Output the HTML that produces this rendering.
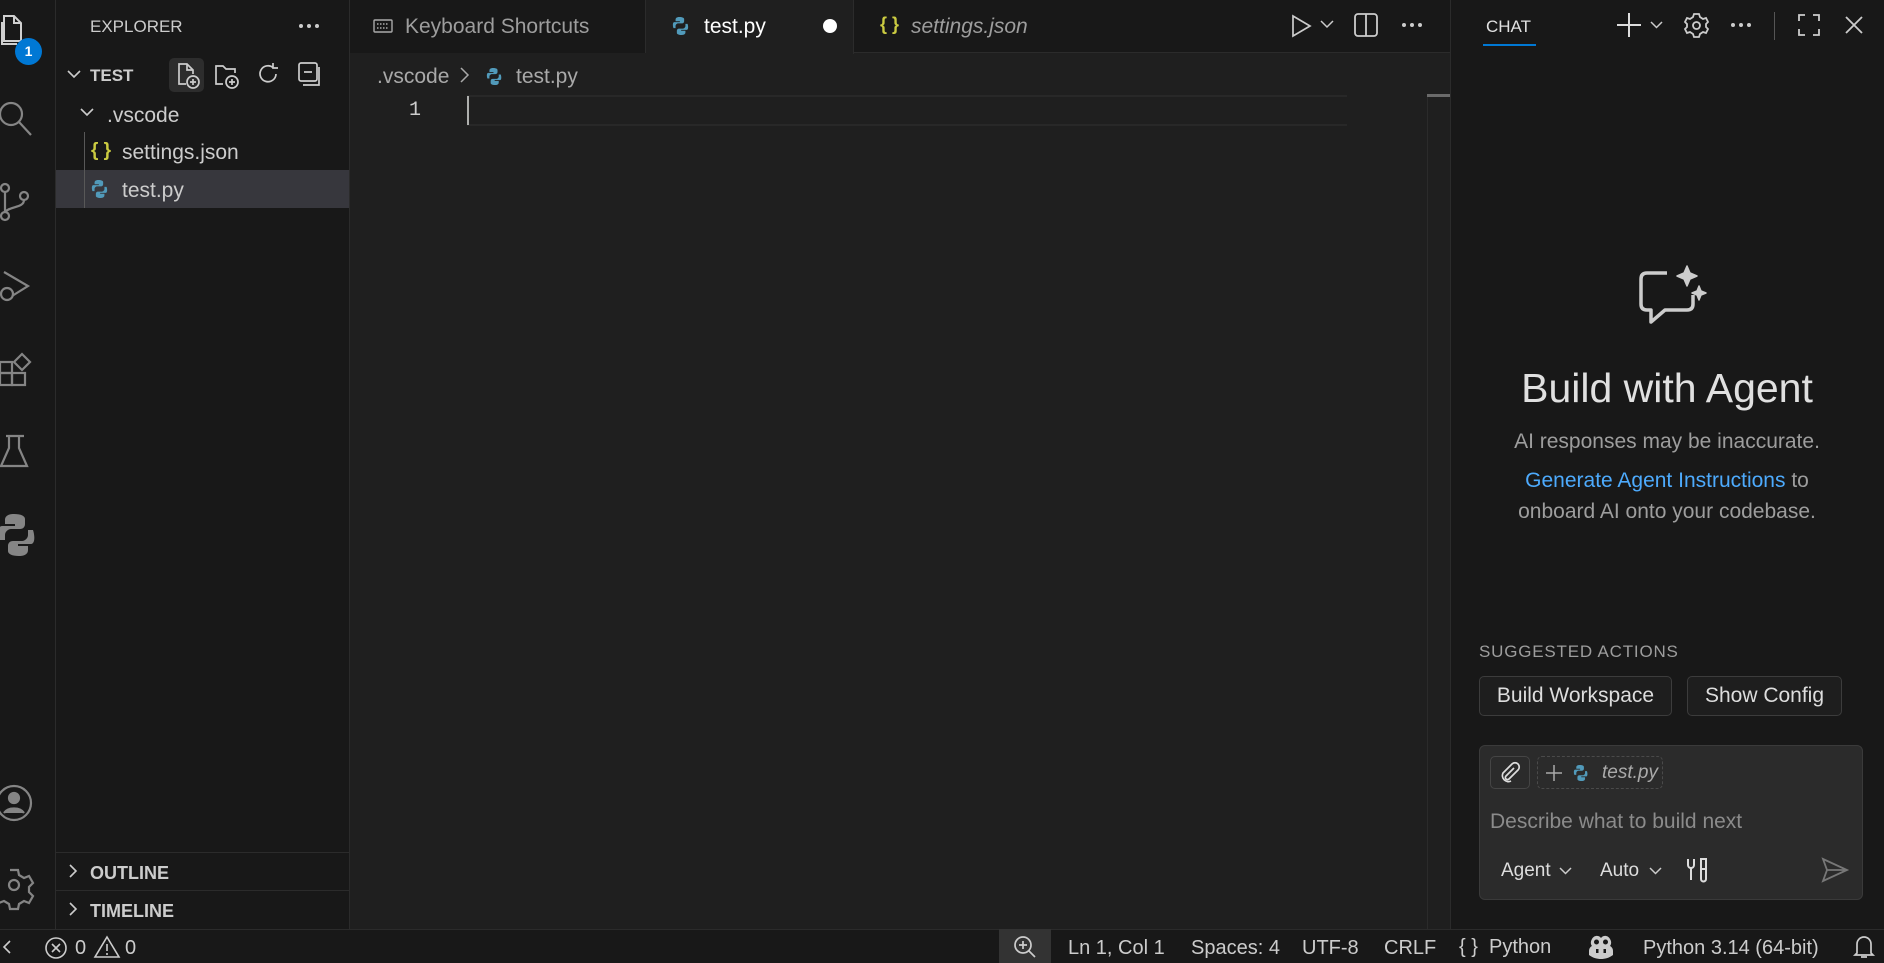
<!DOCTYPE html>
<html><head><meta charset="utf-8">
<style>
*{box-sizing:border-box;margin:0;padding:0}
body{width:1884px;height:963px;overflow:hidden;background:#181818;font-family:"Liberation Sans",sans-serif;color:#cccccc;position:relative}
.abs{position:absolute}
svg{position:absolute;overflow:visible}
.t{position:absolute;white-space:nowrap}
</style></head><body>
<!-- activity bar -->
<div class="abs" style="left:0;top:0;width:56px;height:929px;background:#181818;border-right:1px solid #2b2b2b"></div>
<svg style="left:0;top:14px" width="32" height="40" viewBox="0 0 32 40" fill="none" stroke="#d0d0d0" stroke-width="2"><path d="M4 2h10l7 7v18H4z M14 2v7h7"/><path d="M2 8v22h15"/></svg>
<div class="abs" style="left:15px;top:38px;width:27px;height:27px;border-radius:50%;background:#0078d4;color:#fff;font-size:14px;font-weight:bold;text-align:center;line-height:27px">1</div>
<svg style="left:0;top:100px" width="40" height="40" viewBox="0 0 40 40" fill="none" stroke="#858585" stroke-width="2.2"><circle cx="11" cy="14" r="11"/><path d="M19 22l12 13"/></svg>
<svg style="left:0;top:182px" width="40" height="40" viewBox="0 0 40 40" fill="none" stroke="#858585" stroke-width="2.2"><circle cx="5" cy="6" r="4"/><circle cx="5" cy="34" r="4"/><circle cx="24" cy="14" r="4"/><path d="M5 10v20M24 18c0 8-14 6-19 12"/></svg>
<svg style="left:0;top:268px" width="40" height="40" viewBox="0 0 40 40" fill="none" stroke="#858585" stroke-width="2.2"><path d="M4 4l24 14-16 10"/><circle cx="7" cy="26" r="6"/></svg>
<svg style="left:0;top:350px" width="40" height="40" viewBox="0 0 40 40" fill="none" stroke="#858585" stroke-width="2.2"><rect x="0" y="12" width="12" height="11"/><rect x="0" y="23" width="12" height="12"/><rect x="12" y="23" width="13" height="12"/><path d="M14 12l8-8 8 8-8 8z"/></svg>
<svg style="left:0;top:432px" width="40" height="40" viewBox="0 0 40 40" fill="none" stroke="#858585" stroke-width="2.2"><path d="M6 4h18M9 4v12L1 34h26L19 16V4"/></svg>
<svg style="left:0;top:514px" width="40" height="42" viewBox="0 0 40 42" fill="#858585"><path d="M14 0c-7 0-9 3-9 6v4h10v2H2C-2 12 -2 20 0 26h5v-5c0-3 3-6 6-6h9c3 0 5-2 5-5V5c0-3-4-5-11-5z M19 42c7 0 9-3 9-6v-4H18v-2h13c4 0 4-8 2-14h-5v5c0 3-3 6-6 6h-9c-3 0-5 2-5 5v5c0 3 4 5 11 5z"/></svg>
<svg style="left:0;top:785px" width="40" height="40" viewBox="0 0 40 40" fill="none" stroke="#858585" stroke-width="2.2"><circle cx="14" cy="18" r="17"/><circle cx="14" cy="13" r="5" fill="#858585"/><path d="M4 28c4-6 16-6 20 0" fill="#858585"/></svg>
<svg style="left:0;top:866px" width="40" height="40" viewBox="0 0 40 40" fill="none" stroke="#858585" stroke-width="2.2"><circle cx="14" cy="19" r="5"/><path d="M10 4h8l1 5 5 3 5-2 4 7-4 4v5l4 4-4 7-5-2-5 3-1 5h-8l-1-5-5-3-5 2-4-7 4-4"/></svg>

<!-- sidebar -->
<div class="abs" style="left:56px;top:0;width:294px;height:929px;background:#181818;border-right:1px solid #2b2b2b"></div>
<div class="t" style="left:90px;top:17px;font-size:17px;color:#cccccc">EXPLORER</div>
<svg style="left:299px;top:24px" width="20" height="4" fill="#ccc"><circle cx="2" cy="2" r="2"/><circle cx="10" cy="2" r="2"/><circle cx="18" cy="2" r="2"/></svg>
<svg style="left:67px;top:70px" width="14" height="10" viewBox="0 0 14 10" fill="none" stroke="#ccc" stroke-width="1.6"><path d="M1 1l6 6 6-6"/></svg>
<div class="t" style="left:90px;top:66px;font-size:17px;font-weight:bold">TEST</div>
<div class="abs" style="left:169px;top:58px;width:35px;height:34px;background:#2d2d2d;border-radius:5px"></div>
<svg style="left:177px;top:62px" width="26" height="28" viewBox="0 0 26 28" fill="none" stroke="#ccc" stroke-width="1.7"><path d="M9 22H2V2h8l6 6v4M10 2v6h6"/><circle cx="16" cy="20" r="6"/><path d="M16 17v6M13 20h6"/></svg>
<svg style="left:214px;top:62px" width="28" height="28" viewBox="0 0 28 28" fill="none" stroke="#ccc" stroke-width="1.7"><path d="M9 22H2V4h7l3 3h9v4"/><circle cx="18" cy="20" r="6"/><path d="M18 17v6M15 20h6"/></svg>
<svg style="left:257px;top:62px" width="24" height="24" viewBox="0 0 24 24" fill="none" stroke="#ccc" stroke-width="1.7"><path d="M19 12a8 8 0 1 1-3-6.5M16 1v5h5"/></svg>
<svg style="left:297px;top:61px" width="26" height="26" viewBox="0 0 26 26" fill="none" stroke="#ccc" stroke-width="1.7"><rect x="2" y="2" width="18" height="18" rx="2"/><path d="M7 11h8M6 24h16V6"/></svg>
<svg style="left:80px;top:108px" width="14" height="10" viewBox="0 0 14 10" fill="none" stroke="#ccc" stroke-width="1.6"><path d="M1 1l6 6 6-6"/></svg>
<div class="t" style="left:107px;top:104px;font-size:21px">.vscode</div>
<div class="abs" style="left:84px;top:132px;width:1px;height:76px;background:#585858"></div>
<div class="t" style="left:91px;top:140px;font-size:19px;color:#cbcb41;font-weight:bold">{ }</div>
<div class="t" style="left:122px;top:141px;font-size:21px">settings.json</div>
<div class="abs" style="left:56px;top:170px;width:293px;height:38px;background:#37373d"></div>
<div class="abs" style="left:84px;top:170px;width:1px;height:38px;background:#585858"></div>
<svg style="left:92px;top:180px" width="18" height="18" viewBox="0 0 40 42" fill="#519aba"><path d="M14 0c-7 0-9 3-9 6v4h10v2H2C-2 12 -2 20 0 26h5v-5c0-3 3-6 6-6h9c3 0 5-2 5-5V5c0-3-4-5-11-5z M19 42c7 0 9-3 9-6v-4H18v-2h13c4 0 4-8 2-14h-5v5c0 3-3 6-6 6h-9c-3 0-5 2-5 5v5c0 3 4 5 11 5z"/></svg>
<div class="t" style="left:122px;top:179px;font-size:21px">test.py</div>
<div class="abs" style="left:56px;top:852px;width:293px;height:1px;background:#2b2b2b"></div>
<div class="abs" style="left:56px;top:890px;width:293px;height:1px;background:#2b2b2b"></div>
<svg style="left:69px;top:864px" width="10" height="14" viewBox="0 0 10 14" fill="none" stroke="#ccc" stroke-width="1.6"><path d="M1 1l6 6-6 6"/></svg>
<div class="t" style="left:90px;top:863px;font-size:18px;font-weight:bold">OUTLINE</div>
<svg style="left:69px;top:902px" width="10" height="14" viewBox="0 0 10 14" fill="none" stroke="#ccc" stroke-width="1.6"><path d="M1 1l6 6-6 6"/></svg>
<div class="t" style="left:90px;top:901px;font-size:18px;font-weight:bold">TIMELINE</div>

<!-- editor -->
<div class="abs" style="left:350px;top:0;width:1100px;height:929px;background:#1f1f1f"></div>
<div class="abs" style="left:350px;top:0;width:1100px;height:53px;background:#181818;border-bottom:1px solid #2b2b2b"></div>
<div class="abs" style="left:350px;top:0;width:296px;height:53px;background:#181818;border-right:1px solid #2b2b2b"></div>
<svg style="left:373px;top:19px" width="20" height="14" viewBox="0 0 20 14" fill="none" stroke="#aaa" stroke-width="1.4"><rect x="1" y="1" width="18" height="12" rx="1"/><path d="M4 5h12M4 9h12" stroke-dasharray="1.5 1.5"/></svg>
<div class="t" style="left:405px;top:15px;font-size:21px;color:#9d9d9d">Keyboard Shortcuts</div>
<div class="abs" style="left:646px;top:0;width:208px;height:54px;background:#1f1f1f;border-right:1px solid #2b2b2b"></div>
<svg style="left:673px;top:17px" width="18" height="18" viewBox="0 0 40 42" fill="#519aba"><path d="M14 0c-7 0-9 3-9 6v4h10v2H2C-2 12 -2 20 0 26h5v-5c0-3 3-6 6-6h9c3 0 5-2 5-5V5c0-3-4-5-11-5z M19 42c7 0 9-3 9-6v-4H18v-2h13c4 0 4-8 2-14h-5v5c0 3-3 6-6 6h-9c-3 0-5 2-5 5v5c0 3 4 5 11 5z"/></svg>
<div class="t" style="left:704px;top:15px;font-size:21px;color:#ffffff">test.py</div>
<div class="abs" style="left:823px;top:19px;width:14px;height:14px;border-radius:50%;background:#fff"></div>
<div class="t" style="left:880px;top:14px;font-size:18px;color:#cbcb41;font-weight:bold">{ }</div>
<div class="t" style="left:911px;top:15px;font-size:21px;color:#9d9d9d;font-style:italic">settings.json</div>
<svg style="left:1290px;top:14px" width="24" height="24" viewBox="0 0 24 24" fill="none" stroke="#ccc" stroke-width="1.7"><path d="M3 2l17 10-17 10z"/></svg>
<svg style="left:1320px;top:20px" width="14" height="10" viewBox="0 0 14 10" fill="none" stroke="#ccc" stroke-width="1.5"><path d="M1 1l6 6 6-6"/></svg>
<svg style="left:1354px;top:13px" width="24" height="24" viewBox="0 0 24 24" fill="none" stroke="#ccc" stroke-width="1.8"><rect x="1" y="1" width="22" height="22" rx="3"/><path d="M12 1v22"/></svg>
<svg style="left:1402px;top:23px" width="20" height="4" fill="#ccc"><circle cx="2" cy="2" r="2"/><circle cx="10" cy="2" r="2"/><circle cx="18" cy="2" r="2"/></svg>
<div class="t" style="left:377px;top:65px;font-size:21px;color:#a9a9a9">.vscode</div>
<svg style="left:460px;top:67px" width="10" height="16" viewBox="0 0 10 16" fill="none" stroke="#a9a9a9" stroke-width="1.5"><path d="M1 1l7 7-7 7"/></svg>
<svg style="left:487px;top:68px" width="17" height="17" viewBox="0 0 40 42" fill="#519aba"><path d="M14 0c-7 0-9 3-9 6v4h10v2H2C-2 12 -2 20 0 26h5v-5c0-3 3-6 6-6h9c3 0 5-2 5-5V5c0-3-4-5-11-5z M19 42c7 0 9-3 9-6v-4H18v-2h13c4 0 4-8 2-14h-5v5c0 3-3 6-6 6h-9c-3 0-5 2-5 5v5c0 3 4 5 11 5z"/></svg>
<div class="t" style="left:516px;top:65px;font-size:21px;color:#a9a9a9">test.py</div>
<div class="abs" style="left:467px;top:95px;width:880px;height:31px;border-top:2px solid #282828;border-bottom:2px solid #282828"></div>
<div class="abs" style="left:467px;top:96px;width:2px;height:29px;background:#aeafad"></div>
<div class="t" style="left:409px;top:99px;font-size:20px;color:#cccccc;font-family:'Liberation Mono',monospace">1</div>
<div class="abs" style="left:1427px;top:95px;width:1px;height:834px;background:#2b2b2b"></div>
<div class="abs" style="left:1427px;top:94px;width:23px;height:3px;background:#6a6a6a"></div>

<!-- chat -->
<div class="abs" style="left:1450px;top:0;width:434px;height:929px;background:#181818;border-left:1px solid #2b2b2b"></div>
<div class="t" style="left:1486px;top:17px;font-size:17px;color:#e0e0e0">CHAT</div>
<div class="abs" style="left:1483px;top:44px;width:53px;height:2px;background:#0078d4"></div>
<svg style="left:1617px;top:13px" width="24" height="24" viewBox="0 0 24 24" stroke="#ddd" stroke-width="2"><path d="M12 0v24M0 12h24"/></svg>
<svg style="left:1650px;top:21px" width="13" height="8" viewBox="0 0 13 8" fill="none" stroke="#ccc" stroke-width="1.5"><path d="M1 1l5.5 5.5L12 1"/></svg>
<svg style="left:1684px;top:13px" width="25" height="25" viewBox="0 0 25 25" fill="none" stroke="#ccc" stroke-width="1.8"><circle cx="12.5" cy="12.5" r="3.5"/><path d="M10 1h5l1 3 3 2 3-1 2 4-2 2v3l2 2-2 4-3-1-3 2-1 3h-5l-1-3-3-2-3 1-2-4 2-2v-3l-2-2 2-4 3 1 3-2z"/></svg>
<svg style="left:1731px;top:23px" width="20" height="4" fill="#ccc"><circle cx="2" cy="2" r="2"/><circle cx="10" cy="2" r="2"/><circle cx="18" cy="2" r="2"/></svg>
<div class="abs" style="left:1774px;top:12px;width:1px;height:28px;background:#555"></div>
<svg style="left:1798px;top:14px" width="22" height="22" viewBox="0 0 22 22" fill="none" stroke="#ccc" stroke-width="1.8"><path d="M1 7V1h6M15 1h6v6M21 15v6h-6M7 21H1v-6"/></svg>
<svg style="left:1845px;top:16px" width="18" height="18" viewBox="0 0 18 18" stroke="#ccc" stroke-width="1.8"><path d="M1 1l16 16M17 1L1 17"/></svg>

<svg style="left:1637px;top:264px" width="72" height="66" viewBox="0 0 72 66" fill="none" stroke="#cccccc" stroke-width="3.5" stroke-linejoin="round"><path d="M30 9H10c-4 0-6 2-6 6v25c0 4 2 6 6 6h4v12l14-12h22c4 0 6-2 6-6v-9"/><path d="M50 2l3 7 7 3-7 3-3 7-3-7-7-3 7-3z M62 22l2 5 5 2-5 2-2 5-2-5-5-2 5-2z" fill="#ccc" stroke-width="1.5"/></svg>
<div class="t" style="left:1450px;width:434px;text-align:center;top:365px;font-size:41px;color:#e0e0e0">Build with Agent</div>
<div class="t" style="left:1450px;width:434px;text-align:center;top:430px;font-size:21px;color:#9d9d9d">AI responses may be inaccurate.</div>
<div class="t" style="left:1450px;width:434px;text-align:center;top:469px;font-size:21px;color:#9d9d9d"><span style="color:#4daafc">Generate Agent Instructions</span> to</div>
<div class="t" style="left:1450px;width:434px;text-align:center;top:500px;font-size:21px;color:#9d9d9d">onboard AI onto your codebase.</div>
<div class="t" style="left:1479px;top:642px;font-size:17px;color:#9d9d9d;letter-spacing:0.8px">SUGGESTED ACTIONS</div>
<div class="abs" style="left:1479px;top:676px;width:193px;height:40px;border:1px solid #3c3c3c;border-radius:5px;background:#1e1e1e;font-size:21px;color:#ddd;text-align:center;line-height:38px">Build Workspace</div>
<div class="abs" style="left:1687px;top:676px;width:155px;height:40px;border:1px solid #3c3c3c;border-radius:5px;background:#1e1e1e;font-size:21px;color:#ddd;text-align:center;line-height:38px">Show Config</div>
<div class="abs" style="left:1479px;top:745px;width:384px;height:155px;background:#2b2b2b;border:1px solid #3a3a3a;border-radius:6px"></div>
<div class="abs" style="left:1490px;top:756px;width:40px;height:33px;border:1px solid #454545;border-radius:5px"></div>
<svg style="left:1500px;top:763px" width="20" height="20" viewBox="0 0 20 20" fill="none" stroke="#ddd" stroke-width="1.7"><path d="M14 5l-8 8a2 2 0 0 0 3 3l9-9a4 4 0 0 0-6-6l-9 9a6 6 0 0 0 8 8"/></svg>
<div class="abs" style="left:1537px;top:756px;width:126px;height:33px;border:1px dashed #4a4a4a;border-radius:5px"></div>
<svg style="left:1546px;top:765px" width="16" height="16" viewBox="0 0 16 16" stroke="#aaa" stroke-width="1.5"><path d="M8 0v16M0 8h16"/></svg>
<svg style="left:1574px;top:765px" width="16" height="16" viewBox="0 0 40 42" fill="#519aba"><path d="M14 0c-7 0-9 3-9 6v4h10v2H2C-2 12 -2 20 0 26h5v-5c0-3 3-6 6-6h9c3 0 5-2 5-5V5c0-3-4-5-11-5z M19 42c7 0 9-3 9-6v-4H18v-2h13c4 0 4-8 2-14h-5v5c0 3-3 6-6 6h-9c-3 0-5 2-5 5v5c0 3 4 5 11 5z"/></svg>
<div class="t" style="left:1602px;top:762px;font-size:19px;color:#aaa;font-style:italic">test.py</div>
<div class="t" style="left:1490px;top:810px;font-size:21px;color:#8b8b8b">Describe what to build next</div>
<div class="t" style="left:1501px;top:860px;font-size:19px;color:#ddd">Agent</div>
<svg style="left:1559px;top:867px" width="13" height="8" viewBox="0 0 13 8" fill="none" stroke="#ccc" stroke-width="1.5"><path d="M1 1l5.5 5.5L12 1"/></svg>
<div class="t" style="left:1600px;top:860px;font-size:19px;color:#ddd">Auto</div>
<svg style="left:1649px;top:867px" width="13" height="8" viewBox="0 0 13 8" fill="none" stroke="#ccc" stroke-width="1.5"><path d="M1 1l5.5 5.5L12 1"/></svg>
<svg style="left:1685px;top:857px" width="26" height="26" viewBox="0 0 26 26" fill="none" stroke="#ddd" stroke-width="2"><path d="M3 2v6a3 3 0 0 0 6 0V2M6 11v12M16 2h5v10h-5zM16 12v10a2.5 2.5 0 0 0 5 0V12"/></svg>
<svg style="left:1822px;top:858px" width="26" height="24" viewBox="0 0 26 24" fill="none" stroke="#777" stroke-width="1.8"><path d="M1 1l24 11L1 23l4-11zM5 12h20"/></svg>

<!-- status bar -->
<div class="abs" style="left:0;top:929px;width:1884px;height:34px;background:#181818;border-top:1px solid #2b2b2b"></div>
<svg style="left:2px;top:940px" width="10" height="14" viewBox="0 0 10 14" fill="none" stroke="#ccc" stroke-width="1.6"><path d="M8 1L2 7l6 6"/></svg>
<svg style="left:44px;top:936px" width="24" height="24" viewBox="0 0 24 24" fill="none" stroke="#ccc" stroke-width="1.6"><circle cx="12" cy="12" r="10"/><path d="M8 8l8 8M16 8l-8 8"/></svg>
<div class="t" style="left:75px;top:937px;font-size:20px">0</div>
<svg style="left:94px;top:935px" width="26" height="24" viewBox="0 0 26 24" fill="none" stroke="#ccc" stroke-width="1.6"><path d="M13 2L1 22h24z M13 9v7M13 18v2"/></svg>
<div class="t" style="left:125px;top:937px;font-size:20px">0</div>
<div class="abs" style="left:999px;top:929px;width:52px;height:34px;background:#333"></div>
<svg style="left:1013px;top:935px" width="24" height="24" viewBox="0 0 24 24" fill="none" stroke="#ccc" stroke-width="1.7"><circle cx="10" cy="10" r="8"/><path d="M16 16l6 6M10 6v8M6 10h8"/></svg>
<div class="t" style="left:1068px;top:937px;font-size:20px">Ln 1, Col 1</div>
<div class="t" style="left:1191px;top:937px;font-size:20px">Spaces: 4</div>
<div class="t" style="left:1302px;top:937px;font-size:20px">UTF-8</div>
<div class="t" style="left:1384px;top:937px;font-size:20px">CRLF</div>
<div class="t" style="left:1459px;top:936px;font-size:20px">{ }&nbsp; Python</div>
<svg style="left:1588px;top:935px" width="26" height="24" viewBox="0 0 26 24" fill="#ccc"><path d="M4 4c2-4 7-4 9-1 2-3 7-3 9 1 2 3 1 6 0 7 2 1 3 3 3 5v4c-4 3-8 4-12 4S5 23 1 20v-4c0-2 1-4 3-5-1-1-2-4 0-7z"/><rect x="8" y="14" width="2.5" height="4" fill="#181818"/><rect x="15.5" y="14" width="2.5" height="4" fill="#181818"/><circle cx="8.5" cy="7" r="2.5" fill="#181818"/><circle cx="17.5" cy="7" r="2.5" fill="#181818"/></svg>
<div class="t" style="left:1643px;top:937px;font-size:20px">Python 3.14 (64-bit)</div>
<svg style="left:1853px;top:934px" width="22" height="26" viewBox="0 0 22 26" fill="none" stroke="#ccc" stroke-width="1.7"><path d="M4 19V10a7 7 0 0 1 14 0v9l2 2H2zM8 23h6"/></svg>
</body></html>
